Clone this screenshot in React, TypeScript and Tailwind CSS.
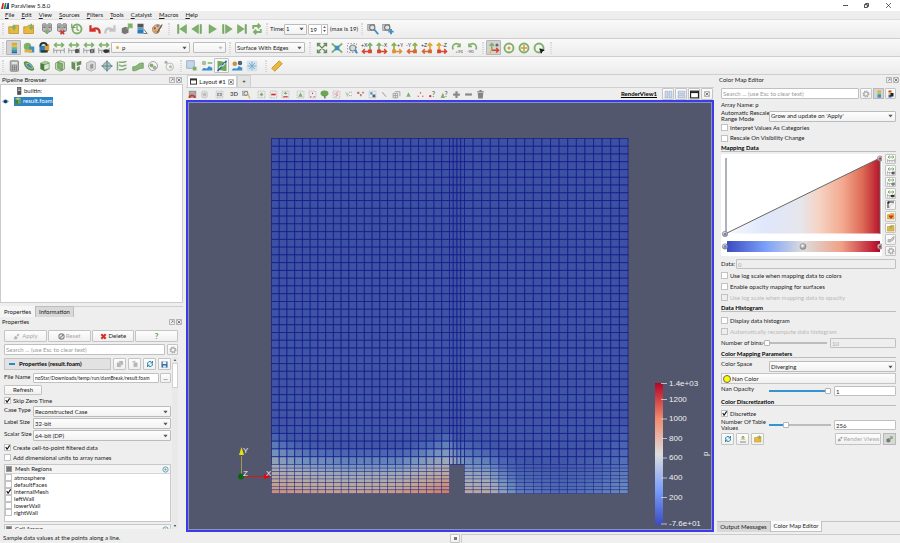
import type { ReactNode } from 'react'

const GREEN = '#7fb069'
const GRAY = '#8c8c8c'
const YELLOW = '#e8b93e'
const RED = '#d3302a'
const BLUE = '#3f8fc4'

const jet = (
  <>
    <rect x="5" y="1" width="7" height="3" fill="#e8a53a" />
    <rect x="5" y="4" width="7" height="3" fill="#d5c34a" />
    <rect x="5" y="7" width="7" height="3" fill="#62b68b" />
    <rect x="5" y="10" width="7" height="3" fill="#3192b8" />
    <rect x="5" y="13" width="7" height="2" fill="#2b5fa0" />
  </>
)
const rescale = (
  <>
    <path d="M2 4h12M5 1 2 4l3 3M11 1l3 3-3 3" fill="none" stroke={GREEN} strokeWidth="2" />
    <path d="M1 8v7M5 11v4M10 11v4M15 8v7M1 11h14" stroke="#888" fill="none" />
  </>
)
const folder = <path d="M1 5h5l1-2h7v11H1z" fill={YELLOW} stroke="#b98d27" />
const servers = (
  <>
    <rect x="2" y="1" width="5" height="10" rx="1" fill="#bdbdbd" stroke="#777" />
    <rect x="9" y="1" width="5" height="10" rx="1" fill="#bdbdbd" stroke="#777" />
    <path d="M3 4h3M10 4h3M3 6h3M10 6h3M4 11l4 3 4-3" stroke="#666" fill="none" />
  </>
)
const box = (
  <>
    <path d="M2 4l6-3 6 2v9l-6 3-6-3z" fill="#6e9e5b" />
    <path d="M2 4l6 2v9l-6-3z" fill="#4d7c40" />
    <path d="M2 4l6-3 6 2-6 3z" fill="#a7c997" />
  </>
)
const frame = <rect x="2" y="2" width="12" height="12" fill="none" stroke="#8a8a8a" strokeDasharray="2 2" />
const loupe = (
  <>
    <rect x="1" y="2" width="9" height="8" fill="#c8ccd0" stroke="#8b8f93" />
    <circle cx="7" cy="6" r="3.5" fill="#dfe6ea" stroke="#777" strokeWidth="1.5" />
  </>
)
const tri = <path d="M8 4l4 8H4z" fill={GREEN} />
const gear = (
  <>
    <circle cx="8" cy="8" r="5.5" fill="none" stroke="#a9a9a9" strokeWidth="3" strokeDasharray="2.6 1.7" />
    <circle cx="8" cy="8" r="4" fill="none" stroke="#a9a9a9" strokeWidth="2" />
  </>
)
const plug = <path d="M2 14l1-5 3-3 5 5-3 3zM8 5l4-4 3 3-4 4z" fill="#909090" />

function axisView(h: string, v: string, text: string, left: boolean) {
  const c = left ? 12 : 4
  return (
    <>
      <path d={left ? 'M12 12.500H2M5 9.500l-3 3 3 3' : 'M4 12.500h10M11 9.500l3 3-3 3'} fill="none" stroke={h} strokeWidth="2" />
      <path d={`M${c} 12V2M${c - 3} 5l3-3 3 3`} fill="none" stroke={v} strokeWidth="2.200" />
      <rect x={c - 2.5} y="10" width="5" height="5" fill={h} />
      <text x={left ? 0 : 8} y="7" fontSize="7" fontFamily="Liberation Sans, sans-serif" fill="#333">{text}</text>
    </>
  )
}

const icons: Record<string, ReactNode> = {
  open: <>{folder}<path d="M8 10V4M5.500 7L8 4l2.500 3" stroke={GREEN} strokeWidth="2" fill="none" /></>,
  save: <>{folder}<path d="M11 1v6M8.500 5l2.500 3 2.500-3" stroke={GREEN} strokeWidth="2" fill="none" /></>,
  connect: <>{servers}<path d="M5 12l3-3 3 3-3 3z" fill={GREEN} /></>,
  disconnect: <>{servers}<path d="M6 10l5 5M11 10l-5 5" stroke={RED} strokeWidth="2" /></>,
  recent: <><circle cx="8" cy="8" r="6" fill="#f3f6ee" stroke={GREEN} strokeWidth="2.500" /><path d="M8 4v5l3 1M1 1v5h5" fill="none" stroke="#779966" strokeWidth="1.500" /></>,
  undo: <path d="M14 14c1-6-4-9-10-5M2 3v7h7" fill="none" stroke={RED} strokeWidth="3" />,
  redo: <path d="M2 14c-1-6 4-9 10-5M14 3v7H7" fill="none" stroke="#c4c4c4" strokeWidth="3" />,
  extract: <><path d="M1 7l5-2 4 2v6l-5 2-4-2z" fill="#777" /><path d="M8 8l6-6M9 2h5v5" stroke={GREEN} strokeWidth="3" fill="none" /></>,
  mapgray: <><g transform="translate(-3 0)"><rect x="5" y="1" width="8" height="5" fill="#555" /><rect x="5" y="6" width="8" height="3" fill="#4a9ccb" /><rect x="5" y="9" width="8" height="5" fill="#2b78b4" /></g><path d="M10 8l5 6M10 14h5" stroke="#555" /></>,
  palette: <><path d="M2 8c0-5 8-8 11-4 2 3-2 3-2 5 1 2-1 5-4 5S2 12 2 8z" fill="#e1b68b" stroke="#a47c52" /><circle cx="5" cy="7" r="1.500" fill={RED} /><circle cx="9" cy="4" r="1.500" fill={BLUE} /><circle cx="6" cy="11" r="1.500" fill={GREEN} /><path d="M15 2L8 13" stroke="#6e5139" strokeWidth="1.500" /></>,
  first: <path d="M2 2h2v12H2zM14 2v12L5 8z" fill={GREEN} stroke="#5f8f4c" strokeWidth=".5" />,
  prev: <path d="M12 2h2v12h-2zM10 2v12L1 8z" fill={GREEN} stroke="#5f8f4c" strokeWidth=".5" />,
  play: <path d="M4 2l10 6-10 6z" fill={GREEN} stroke="#5f8f4c" strokeWidth=".5" />,
  next: <path d="M2 2h2v12H2zM6 2v12l9-6z" fill={GREEN} stroke="#5f8f4c" strokeWidth=".5" />,
  last: <path d="M12 2h2v12h-2zM2 2v12l9-6z" fill={GREEN} stroke="#5f8f4c" strokeWidth=".5" />,
  loop: <path d="M3 8V4h8M9 1l3 3-3 3M13 8v4H5M7 9l-3 3 3 3" fill="none" stroke={GREEN} strokeWidth="2.500" />,
  zoomTime: <>{loupe}<path d="M10 9l5 6" stroke={BLUE} strokeWidth="2.500" /></>,
  addTime: <>{loupe}<path d="M12 8v7M8.500 11.500h7" stroke={BLUE} strokeWidth="2.500" /></>,
  jet,
  editMap: <><circle cx="6" cy="6" r="5" fill={GREEN} /><rect x="8" y="6" width="7" height="8" fill="#3f93b8" /><rect x="2" y="10" width="10" height="4" fill="#e0b14a" /></>,
  separate: <><rect x="2" y="5" width="9" height="9" fill="#2f7fb5" /><rect x="9" y="3" width="6" height="9" fill="#d4a33d" /><path d="M3 6c0-6 8-6 9-1" fill="none" stroke="#333" strokeWidth="2.500" /><path d="M4 11h9v3H4z" fill="#333" /></>,
  rescale,
  rescaleCustom: <>{rescale}<circle cx="12" cy="12" r="3" fill="#555" /></>,
  rescaleTime: <>{rescale}<circle cx="12" cy="12" r="3" fill="#555" /><path d="M12 10v4" stroke="#eee" /></>,
  rescaleVisible: <>{rescale}<ellipse cx="11" cy="12" rx="4" ry="2.500" fill="#333" /></>,
  resetCamera: <path d="M2 6V2h4M10 2h4v4M14 10v4h-4M6 14H2v-4M2 2l12 12M14 2L2 14" fill="none" stroke="#6a8f5b" strokeWidth="1.800" />,
  zoomData: <><path d="M1 2l14 12M15 2L1 14" stroke={GREEN} strokeWidth="2.200" /><path d="M5 5h6v6H5z" fill={BLUE} /></>,
  zoomBox: <>{frame}<circle cx="9" cy="8" r="4" fill="#ccdfe9" stroke="#888" strokeWidth="1.500" /><path d="M12 11l3 4" stroke={BLUE} strokeWidth="2.500" /></>,
  plusX: axisView('#d9442f', GREEN, '+X', true),
  minusX: axisView('#d9442f', GREEN, '-X', false),
  plusY: axisView('#e0902f', '#8eaf45', '+Y', false),
  minusY: axisView('#d9642f', '#8eaf45', '-Y', true),
  plusZ: axisView('#d9642f', '#e0a52f', '+Z', true),
  minusZ: axisView('#d9442f', '#e0a52f', '-Z', false),
  rotCw: <><path d="M3 10a5 5 0 1 1 9-4M8 6h4V2" fill="none" stroke={GREEN} strokeWidth="2.200" /><text x="6" y="15" fontSize="6" fill="#555">+90</text></>,
  rotCcw: <><path d="M13 10a5 5 0 1 0-9-4M8 6H4V2" fill="none" stroke={GREEN} strokeWidth="2.200" /><text x="1" y="15" fontSize="6" fill="#555">-90</text></>,
  axes: <><path d="M5 11V2M2 5l3-3 3 3" fill="none" stroke={GREEN} strokeWidth="2" /><path d="M5 11h9M11 8l3 3-3 3" fill="none" stroke="#d9442f" strokeWidth="2" /><path d="M5 11l-3 4" stroke={YELLOW} strokeWidth="2" /><circle cx="12" cy="4" r="2" fill="#666" /></>,
  centerShow: <><circle cx="8" cy="8" r="6" fill="none" stroke={GREEN} strokeWidth="2.500" /><circle cx="8" cy="8" r="2" fill="#d99a2f" /></>,
  centerReset: <><circle cx="8" cy="8" r="6" fill="none" stroke={GREEN} strokeWidth="2.500" /><path d="M8 4v8M4 8h8" stroke="#d99a2f" strokeWidth="2" /></>,
  centerPick: <><circle cx="8" cy="8" r="6" fill="none" stroke={GREEN} strokeWidth="2.500" /><path d="M9 9l6 2-3 1-1 3z" fill="#111" stroke="#111" /></>,
  calc: <><rect x="3" y="1" width="11" height="14" rx="1" fill="#b8b8b8" stroke="#777" /><rect x="5" y="3" width="7" height="2" fill="#eee" /><path d="M5 8h7M5 10.500h7M5 13h7" stroke="#666" strokeDasharray="1.700 1" strokeWidth="1.500" /></>,
  contour: <><path d="M1 3c3-4 13 2 14 10-4 4-14-2-14-10z" fill="#5b9148" /><path d="M4 5c3-2 8 2 9 6-3 1-9-2-9-6z" fill="#4f86a8" stroke="#b5d5a5" /></>,
  clip: <>{box}<path d="M7 7l6-2v6l-6 2z" fill="#dfe9da" /></>,
  slice: <><path d="M2 4l6-3 6 2v9l-6 3-6-3z" fill="#c9d6c3" stroke="#6c9a5a" /><path d="M5 3l6 2v9l-6-3z" fill="#82b36c" stroke="#5b8b48" /></>,
  threshold: <><path d="M2 2l5 2v10l-5-3zM9 3l6-2v5l-6 2zM9 10l4-2v5l-4 2z" fill="#668f58" /><path d="M2 2h10l-5 2z" fill="#a8caa0" /></>,
  extractSubset: <><path d="M2 4l6-3 6 2v9l-6 3-6-3z" fill="#d8d8d8" stroke="#a8a8a8" /><path d="M7 6l4-1v6l-4 1z" fill="#999" /></>,
  glyph: <><circle cx="8" cy="8" r="5" fill="#b6cfb0" stroke="#789" /><path d="M8 0l2 3H6zM8 16l2-3H6zM0 8l3-2v4zM16 8l-3-2v4z" fill="#5c87a1" /><path d="M4 8h8M8 4v8" stroke="#57819e" strokeWidth="1.500" /></>,
  stream: <path d="M2 2v12M4 3h5c2 0 2-1 5-1M4 7c3 0 3 2 5 1s3-1 5-1M4 13h5c2 0 2-2 5-2" fill="none" stroke="#86ab7a" strokeWidth="2" />,
  warp: <path d="M1 9c5 1 7-6 14-5v7c-6-1-9 5-14 3z" fill="#88b877" stroke="#6a9359" />,
  group: <><circle cx="8" cy="8" r="6" fill="none" stroke={GRAY} /><circle cx="6" cy="7" r="2.500" fill={GREEN} /><circle cx="10" cy="10" r="2.500" fill="#a9a9a9" /></>,
  extractLevel: <><circle cx="9" cy="9" r="5" fill="none" stroke="#aaa" /><circle cx="4" cy="3" r="2" fill="#aaa" /><circle cx="10" cy="9" r="2" fill="#a5c59b" /></>,
  extractSel: <><rect x="1" y="1" width="10" height="10" fill="#c3d5e6" stroke="#8aa3b8" /><path d="M9 9h5v5H9z" fill={GREEN} /></>,
  plotTime: <><circle cx="4" cy="4" r="3" fill="#a8bda1" /><path d="M9 4h6" stroke={GREEN} strokeWidth="2" /><path d="M1 14c3-7 6 0 8-4s4 1 6 0v4z" fill="#3c91ca" /></>,
  plotLine: <><path d="M2 1l12 2v12L2 13z" fill="#6da65a" /><path d="M14 1L2 15" stroke="#2a5d94" strokeWidth="2" /><path d="M4 11c1-6 5 1 8-7" stroke="#bfe5fb" strokeWidth="1.500" fill="none" /></>,
  plotSel: <><circle cx="5" cy="5" r="3" fill="#c98f3a" /><circle cx="12" cy="4" r="3" fill="#4f6374" /><path d="M1 14c3-6 6 0 8-4s4 1 6 0v4z" fill="#3c91ca" /></>,
  probe: <><rect x="1" y="1" width="14" height="14" fill="#d3e4ef" /><path d="M8 2v12M2 8h12M4 4l8 8M12 4l-8 8" stroke="#78a9ca" strokeWidth="1.200" /></>,
  ruler: <path d="M1 11L11 1l4 4L5 15z" fill={YELLOW} stroke="#b78522" />,
  undoCam: <><rect x="2" y="2" width="12" height="11" fill="#aaa" stroke="#777" /><path d="M2 14c2-6 8-6 11 0" stroke={RED} strokeWidth="3" fill="none" /></>,
  redoCam: <><rect x="3" y="2" width="10" height="12" rx="3" fill="#ddd" stroke="#bbb" /><circle cx="8" cy="8" r="3" fill="#bbb" /></>,
  capture: <>{frame}<rect x="4" y="5" width="8" height="6" fill="#888" /><circle cx="8" cy="8" r="2" fill="#d7e6f0" /></>,
  adjust: <>{loupe}<path d="M11 8l3 7" stroke={YELLOW} strokeWidth="2.500" /></>,
  selAdd: <>{frame}<path d="M8 5v6M5 8h6" stroke={GREEN} strokeWidth="2.500" /></>,
  selSub: <>{frame}<path d="M4 8h8" stroke={RED} strokeWidth="3" /></>,
  selToggle: <>{frame}<path d="M8 3v5M5 6h6" stroke={GREEN} strokeWidth="2" /><path d="M4 12h8" stroke={RED} strokeWidth="2" /></>,
  selCells: <>{frame}{tri}</>,
  selPoints: <>{frame}<path d="M4 11h2v2H4zM10 11h2v2h-2zM7 5h2v2H7z" fill={RED} /></>,
  frustum: <><ellipse cx="8" cy="6" rx="7" ry="5" fill="#6aa654" /><path d="M7 9h3v6H7z" fill="#786" /></>,
  polyCells: <>{frame}<path d="M4 7h4l2-4M6 12l5-4" stroke="#e39898" strokeWidth="2" fill="none" /></>,
  polyPoints: <><path d="M2 3l7 4-3 6z" fill="#b5ccaa" /><path d="M9 4h5M9 10h5" stroke="#777" strokeDasharray="2 1" /></>,
  block: <path d="M2 3h4v4H2zM7 7h3v4H7zM11 3h3v3h-3z" fill="#b67f74" />,
  interactive: <>{frame}<path d="M4 4h4v4H4z" fill={BLUE} /><path d="M8 8h5v5H8z" fill="#386991" /></>,
  wand: <path d="M4 4l7 8" stroke="#aaa" strokeWidth="2" />,
  stack: <path d="M2 6h8v8H2zM5 3h9v8M2 10h8M6 6v8" fill="none" stroke="#999" strokeWidth="1.500" />,
  tri,
  dots: <path d="M7 4h2v2H7zM3 10h2v2H3zM11 10h2v2h-2z" fill={RED} />,
  askDot: <><circle cx="4" cy="11" r="2" fill={RED} /><text x="7" y="12" fontSize="12" fontWeight="700" fill="#777">?</text></>,
  askTri: <><path d="M5 5l4 9H1z" fill={GREEN} /><text x="8" y="12" fontSize="12" fontWeight="700" fill="#777">?</text></>,
  grow: <path d="M8 2v12M2 8h12" stroke="#8a8a8a" strokeWidth="4" />,
  shrink: <path d="M2 8h12" stroke="#8a8a8a" strokeWidth="4" />,
  trash: <path d="M3 5h10l-1 10H4zM2 2h12v2H2zM6 0h4v2H6z" fill="#858585" />,
  splitV: <path d="M2 2h5v12H2zM9 2h5v12H9z" fill="#cfd9ec" stroke="#8fa0c4" />,
  splitH: <path d="M2 2h12v5H2zM2 9h12v5H2z" fill="#cfd9ec" stroke="#8fa0c4" />,
  maximize: <><rect x="1" y="2" width="14" height="12" fill="#fff" stroke="#222" strokeWidth="2" /><path d="M1 4h14" stroke="#222" strokeWidth="3" /></>,
  close: <><rect x="1" y="1" width="14" height="14" rx="2" fill="#eee" stroke="#777" strokeWidth="1.500" /><path d="M4 4l8 8M12 4l-8 8" stroke="#555" strokeWidth="2" /></>,
  float: <><rect x="1" y="1" width="14" height="14" rx="2" fill="none" stroke="#777" strokeWidth="1.500" /><path d="M5 11l6-6M7 5h4v4" stroke="#666" strokeWidth="1.500" fill="none" /></>,
  apply: plug,
  reset: <><circle cx="8" cy="8" r="6" fill="none" stroke="#888" strokeWidth="2.500" /><path d="M12 4l-8 8" stroke="#888" strokeWidth="2.500" /></>,
  delete: <path d="M3 3l10 10M13 3L3 13" stroke={RED} strokeWidth="5" />,
  gear,
  copy: <path d="M2 5h8v9H2zM6 2h8v8H6z" fill="#aaa" stroke="#ddd" />,
  paste: <path d="M5 5h8v9H5zM3 2h6v3H3z" fill="#b5b5b5" stroke="#ddd" />,
  refresh: <path d="M3 9a5 5 0 0 1 8-5l2 2M13 2v4H9M13 7a5 5 0 0 1-8 5l-2-2M3 14v-4h4" fill="none" stroke="#2a84ad" strokeWidth="2" />,
  disk: <><path d="M1 1h14v14H1z" fill="#3c6fa8" /><path d="M4 1h8v6H4zM5 10h6v5H5z" fill="#eef3f8" /></>,
  eye: <><path d="M0 8c4-6 12-6 16 0-4 6-12 6-16 0z" fill="#8fb9d4" /><circle cx="8" cy="8" r="4" fill="#153f61" /></>,
  host: <><rect x="5" y="1" width="7" height="14" fill="#555" stroke="#333" /><path d="M6 4h5M6 7h5" stroke="#ddd" strokeWidth="1.500" /></>,
  box,
  jetDark: <><rect x="3" y="1" width="6" height="4" fill="#c73a2f" /><rect x="3" y="5" width="6" height="5" fill="#e5c43a" /><rect x="3" y="10" width="6" height="5" fill="#2a63b5" /><path d="M7 6h6v7H7z" fill="#222" /></>,
  control: <><path d="M2 14V2h12" fill="none" stroke="#222" strokeWidth="2" /><path d="M5 14c0-5 4-9 9-9" fill="none" stroke="#999" /><path d="M1 1h4v4H1z" fill="#222" /></>,
  preset: <>{folder}<path d="M8 14L3 8l3-2 2 2 2-2 3 2z" fill={RED} /></>,
  savePreset: <><path d="M2 14h12" stroke="#888" strokeWidth="2" /><path d="M8 2l5 8H3z" fill="#e4c9a0" /><path d="M8 8V2M5 5l3-3 3 3" stroke={GREEN} strokeWidth="2" fill="none" /></>,
  manual: <path d="M2 14h5v-5H2zM7 9l7-7v6l-5 5" fill="#c1c1c1" stroke="#999" />,
  hub: <><circle cx="8" cy="8" r="6" fill="none" stroke="#4a93a8" strokeWidth="1.800" /><circle cx="8" cy="8" r="2.500" fill="#5fa0b2" /></>,
}

function Icon({ name, className = 'size-[12px]' }: { name: string; className?: string }) {
  return (
    <svg viewBox="0 0 16 16" className={`shrink-0 ${className}`} aria-hidden="true">
      {icons[name]}
    </svg>
  )
}

const pressed = 'border border-[#b5b5b5] bg-[#d2d2d2]'
const hovered = 'border border-[#c0c0c0] bg-[#fafafa]'

function Tools({ names, on, hover }: { names: string[]; on?: string; hover?: string }) {
  return (
    <>
      {names.map(n => (
        <button
          key={n}
          aria-label={n}
          className={`flex size-[15px] shrink-0 items-center justify-center rounded-[1px] ${n === on ? pressed : n === hover ? hovered : ''}`}
        >
          <Icon name={n} />
        </button>
      ))}
    </>
  )
}

function Handle({ className = '' }: { className?: string }) {
  return <span className={`h-[12px] w-[2px] shrink-0 border-x border-dotted border-[#d8d8d8] ${className}`} />
}

function Select({ value, label, className = '', disabled = false }: { value: string; label: string; className?: string; disabled?: boolean }) {
  return (
    <span className={`relative flex h-[11px] ${className}`}>
      <select
        aria-label={label}
        disabled={disabled}
        className="h-full w-full appearance-none rounded-[1px] border border-[#bcbcbc] bg-linear-to-b from-[#fdfdfd] to-[#f2f2f2] pl-[1px]"
      >
        <option>{value}</option>
      </select>
      <svg viewBox="0 0 6 4" className="pointer-events-none absolute top-1/2 right-[3px] h-[3px] w-[5px] -translate-y-1/2" aria-hidden="true">
        <path d="M0 0h6L3 4z" fill={disabled ? '#bbb' : '#555'} />
      </svg>
    </span>
  )
}

function Tick({ checked, disabled = false }: { checked: boolean; disabled?: boolean }) {
  return (
    <span className="relative flex shrink-0">
      <input
        type="checkbox"
        defaultChecked={checked}
        disabled={disabled}
        className="peer size-[7px] appearance-none border border-[#c2c2c2] bg-white disabled:bg-[#eeeeee]"
      />
      <svg viewBox="0 0 8 8" className="pointer-events-none absolute inset-0 hidden size-[7px] peer-checked:block" aria-hidden="true">
        <path d="M2 3.500L3.500 6 6.500 1.500" fill="none" stroke="#111" strokeWidth="1.300" />
      </svg>
    </span>
  )
}

function Check({ label, checked = false, disabled = false, className = 'h-[11px]' }: { label: string; checked?: boolean; disabled?: boolean; className?: string }) {
  return (
    <label className={`flex shrink-0 items-center gap-[2px] ${disabled ? 'text-[#b9b9b9]' : ''} ${className}`}>
      <Tick checked={checked} disabled={disabled} />
      {label}
    </label>
  )
}

const btn = 'flex shrink-0 items-center justify-center rounded-[1px] border border-[#c4c4c4] bg-linear-to-b from-[#fdfdfd] to-[#f0f0f0]'
const field = 'min-w-0 rounded-[1px] border border-[#c0c0c0] bg-white px-[1px] placeholder:text-[#999] disabled:bg-[#eeeeee] disabled:text-[#aaa]'
const thumb =
  'h-[6px] appearance-none bg-transparent [&::-webkit-slider-thumb]:-mt-[2px] [&::-webkit-slider-thumb]:size-[6px] [&::-webkit-slider-thumb]:appearance-none [&::-webkit-slider-thumb]:rounded-[1px] [&::-webkit-slider-thumb]:border [&::-webkit-slider-thumb]:border-[#b5b5b5] [&::-webkit-slider-thumb]:bg-white [&::-webkit-slider-runnable-track]:h-[2px]'

function DockHeader({ title }: { title: string }) {
  return (
    <header className="flex h-[9px] shrink-0 items-center pl-[2px]">
      <h2 className="flex-1">{title}</h2>
      <button aria-label={`Float ${title}`}><Icon name="float" className="size-[6px]" /></button>
      <button aria-label={`Close ${title}`} className="mr-px ml-[1px]"><Icon name="close" className="size-[6px]" /></button>
    </header>
  )
}

function Heading({ children, className = '' }: { children: ReactNode; className?: string }) {
  return <h3 className={`flex h-[9px] shrink-0 items-end border-b border-[#bdbdbd] leading-[6px] font-bold text-black ${className}`}>{children}</h3>
}

function TitleBar() {
  return (
    <header className="flex h-[11px] shrink-0 items-center bg-white pl-[1px]">
      <svg viewBox="0 0 16 12" className="h-[6px] w-[8px]" aria-hidden="true">
        <path d="M3 0h3L4 12H0z" fill="#c22" />
        <path d="M8 0h3L9 12H5z" fill="#2a8a3a" />
        <path d="M13 0h3v12h-6z" fill="#224a9a" />
      </svg>
      <h1 className="ml-[2px] flex-1">ParaView 5.8.0</h1>
      <button aria-label="Minimize" className="mr-[16px]"><svg viewBox="0 0 6 6" className="size-[5px]"><path d="M0 3h6" stroke="#333" /></svg></button>
      <button aria-label="Restore" className="mr-[17px]"><svg viewBox="0 0 6 6" className="size-[5px]"><path d="M.5 2h3.500v3.500H.5zM2 2V.5h3.500V4H4" fill="none" stroke="#222" /></svg></button>
      <button aria-label="Close" className="mr-[9px]"><svg viewBox="0 0 6 6" className="size-[5px]"><path d="M0 0l6 6M6 0L0 6" stroke="#222" strokeWidth=".8" /></svg></button>
    </header>
  )
}

function MenuBar() {
  const items = ['File', 'Edit', 'View', 'Sources', 'Filters', 'Tools', 'Catalyst', 'Macros', 'Help']
  return (
    <nav className="flex h-[9px] shrink-0 items-center gap-[7px] border-b border-[#dcdcdc] pl-[5px]">
      {items.map(m => (
        <button key={m}><span className="underline">{m[0]}</span>{m.slice(1)}</button>
      ))}
    </nav>
  )
}

const bar = 'flex shrink-0 items-center border-b border-[#cfcfcf] bg-linear-to-b from-[#f9f9f9] to-[#ececec] pl-[2px]'

function Toolbars() {
  return (
    <>
      <div className={`${bar} h-[19px]`}>
        <Handle className="mr-[2px]" />
        <Tools names={['open', 'save']} />
        <span className="w-[3px]" />
        <Tools names={['connect', 'disconnect', 'recent']} />
        <span className="w-[3px]" />
        <Tools names={['undo', 'redo']} />
        <span className="w-[2px]" />
        <Tools names={['extract', 'mapgray', 'palette']} />
        <Handle className="mx-[4px]" />
        <Tools names={['first', 'prev', 'play', 'next', 'last', 'loop']} />
        <Handle className="mr-[2px] ml-[2px]" />
        <span className="w-[14px]">Time:</span>
        <Select label="Time" value="1" className="w-[23px]" />
        <input aria-label="Time step" type="text" defaultValue="19" className={`${field} ml-[1px] h-[11px] w-[14px]`} />
        <span className="mr-[2px] flex h-[11px] w-[6px] flex-col items-center justify-center gap-[2px] border border-l-0 border-[#c0c0c0] bg-white">
          <button aria-label="Step up"><svg viewBox="0 0 4 3" className="h-[2px] w-[3px]"><path d="M0 3h4L2 0z" fill="#555" /></svg></button>
          <button aria-label="Step down"><svg viewBox="0 0 4 3" className="h-[2px] w-[3px]"><path d="M0 0h4L2 3z" fill="#555" /></svg></button>
        </span>
        <span className="w-[31px] whitespace-nowrap">(max is 19)</span>
        <Handle className="mr-[2px]" />
        <Tools names={['zoomTime', 'addTime']} />
      </div>
      <div className={`${bar} h-[18px]`}>
        <Handle className="mr-[2px]" />
        <Tools names={['jet', 'editMap', 'separate', 'rescale', 'rescaleCustom', 'rescaleTime', 'rescaleVisible']} on="jet" />
        <span className="relative flex">
          <Select label="Coloring" value="p" className="w-[79px] [&>select]:pl-[10px]" />
          <span className="pointer-events-none absolute top-[4px] left-[5px] size-[3px] rounded-full bg-[#dcae45]" />
        </span>
        <Select label="Component" value="" disabled className="ml-[3px] w-[33px]" />
        <Handle className="mx-[3px]" />
        <Select label="Representation" value="Surface With Edges" className="ml-[1px] w-[70px]" />
        <Handle className="mr-[3px] ml-[4px]" />
        <Tools names={['resetCamera', 'zoomData', 'zoomBox', 'plusX', 'minusX', 'plusY', 'minusY', 'plusZ', 'minusZ', 'rotCw', 'rotCcw']} />
        <Handle className="mr-[2px] ml-[3px]" />
        <Tools names={['axes', 'centerShow', 'centerReset', 'centerPick']} on="axes" />
        <Handle className="ml-[4px]" />
      </div>
      <div className={`${bar} h-[18px]`}>
        <Handle className="mr-[2px]" />
        <div className="flex w-[170px] justify-between">
          <Tools names={['calc', 'contour', 'clip', 'slice', 'threshold', 'extractSubset', 'glyph', 'stream', 'warp', 'group', 'extractLevel']} />
        </div>
        <Handle className="mr-[2px] ml-[4px]" />
        <Tools names={['extractSel', 'plotTime', 'plotLine', 'plotSel', 'probe']} hover="plotLine" />
        <Handle className="mr-[2px] ml-[6px]" />
        <Tools names={['ruler']} />
      </div>
    </>
  )
}

function PipelineBrowser() {
  return (
    <section className="flex min-h-0 flex-1 flex-col">
      <DockHeader title="Pipeline Browser" />
      <ul className="flex-1 border border-[#cccccc] bg-white pt-px">
        <li className="flex h-[10px] items-center pl-[14px]"><Icon name="host" className="size-[8px]" /><span className="ml-[1px]">builtin:</span></li>
        <li className="flex h-[10px] items-center">
          <button aria-label="Toggle visibility" className="mr-[5px] ml-[1px]"><Icon name="eye" className="size-[7px]" /></button>
          <span className="flex h-[9px] items-center gap-[1px] bg-[#2b84c6] pr-[1px] text-white"><Icon name="box" className="size-[8px]" />result.foam</span>
        </li>
      </ul>
    </section>
  )
}

function FormSelect({ label, value }: { label: string; value: string }) {
  return (
    <div className="mt-px flex h-[11px]">
      <span className="w-[29px] whitespace-nowrap">{label}</span>
      <Select label={label} value={value} className="flex-1" />
    </div>
  )
}

const regions = ['atmosphere', 'defaultFaces', 'internalMesh', 'leftWall', 'lowerWall', 'rightWall']

function ListHead({ title }: { title: string }) {
  return (
    <div className="flex h-[9px] items-center gap-[3px] border-b border-[#d5d5d5] bg-[#f4f4f4] px-[1px]">
      <span className="size-[6px] border border-[#999] bg-[#777]" />
      <span className="flex-1">{title}</span>
      <Icon name="hub" className="size-[7px]" />
    </div>
  )
}

function PropertiesPanel() {
  return (
    <section className="shrink-0 pb-[4px]">
      <div role="tablist" className="mt-[3px] flex h-[11px]">
        <button role="tab" aria-selected className="w-[36px] border-r border-[#bbb] bg-[#f5f5f5]">Properties</button>
        <button role="tab" className="w-[38px] border-t border-r border-[#bdbdbd] bg-[#d9d9d9]">Information</button>
        <span className="flex-1 border-t border-[#cfcfcf]" />
      </div>
      <DockHeader title="Properties" />
      <div className="mt-[4px] mr-[5px] ml-[4px] grid h-[12px] grid-cols-4 gap-px">
        <button disabled className={`${btn} gap-[2px] text-[#aaa]`}><Icon name="apply" className="size-[7px] opacity-60" />Apply</button>
        <button disabled className={`${btn} gap-[1px] text-[#aaa]`}><Icon name="reset" className="size-[7px]" />Reset</button>
        <button className={`${btn} gap-[2px]`}><Icon name="delete" className="size-[7px]" />Delete</button>
        <button aria-label="Help" className={`${btn} text-[8px] font-bold text-[#679d50]`}>?</button>
      </div>
      <div className="mt-[2px] mr-[5px] ml-[4px] flex h-[11px] gap-[2px]">
        <input type="text" aria-label="Search properties" placeholder="Search ... (use Esc to clear text)" className={`${field} flex-1`} />
        <button aria-label="Advanced" className={`${btn} w-[11px]`}><Icon name="gear" className="size-[8px]" /></button>
      </div>
      <div className="mt-[2px] mr-[5px] flex h-[172px] overflow-hidden pl-[4px]">
        <div className="min-w-0 flex-1">
          <div className="mt-px flex h-[12px] gap-[2px]">
            <button className="flex flex-1 items-center border border-[#c5c5c5] bg-[#e2e2e2] pl-[4px] font-bold text-black">
              <span className="mr-[4px] h-[2px] w-[6px] bg-[#2b8abf]" />Properties (result.foam)
            </button>
            <button aria-label="Copy" className={`${btn} w-[13px]`}><Icon name="copy" className="size-[8px]" /></button>
            <button aria-label="Paste" className={`${btn} w-[13px]`}><Icon name="paste" className="size-[8px]" /></button>
            <button aria-label="Restore defaults" className={`${btn} w-[13px]`}><Icon name="refresh" className="size-[8px]" /></button>
            <button aria-label="Save defaults" className={`${btn} w-[13px]`}><Icon name="disk" className="size-[7px]" /></button>
          </div>
          <div className="mt-[3px] flex h-[10px]">
            <label htmlFor="file" className="w-[29px] whitespace-nowrap">File Name</label>
            <input id="file" type="text" defaultValue="noStar/Downloads/temp/run/damBreak/result.foam" className={`${field} flex-1 text-[5px]`} />
            <button aria-label="Browse" className={`${btn} ml-[1px] w-[11px]`}>...</button>
          </div>
          <button className={`${btn} mt-[2px] h-[10px] w-[38px]`}>Refresh</button>
          <Check label="Skip Zero Time" checked className="mt-px h-[9px]" />
          <FormSelect label="Case Type" value="Reconstructed Case" />
          <FormSelect label="Label Size" value="32-bit" />
          <FormSelect label="Scalar Size" value="64-bit (DP)" />
          <Check label="Create cell-to-point filtered data" checked className="mt-[2px] h-[9px]" />
          <Check label="Add dimensional units to array names" className="mt-px h-[9px]" />
          <div className="mt-[2px] h-[58px] border border-[#c8c8c8] bg-white">
            <ListHead title="Mesh Regions" />
            {regions.map(r => (
              <Check key={r} label={r} checked={r === 'internalMesh'} className="h-[7px]" />
            ))}
          </div>
          <div className="mt-[2px] border border-[#c8c8c8] bg-white">
            <ListHead title="Cell Arrays" />
          </div>
        </div>
        <div className="ml-[1px] flex w-[6px] flex-col items-center bg-[#e9e9e9]">
          <svg viewBox="0 0 4 3" className="my-[2px] h-[2px] w-[4px]"><path d="M0 3h4L2 0z" fill="#666" /></svg>
          <span className="h-[25px] w-full border border-[#d0d0d0] bg-white" />
          <span className="flex-1" />
          <svg viewBox="0 0 4 3" className="my-[2px] h-[2px] w-[4px]"><path d="M0 0h4L2 3z" fill="#555" /></svg>
        </div>
      </div>
    </section>
  )
}

// Mesh block boundaries in scene units
const X0 = 271.5, X1 = 449.5, X2 = 464.5, X3 = 628
const Y0 = 138.5, Y1 = 464.5, Y2 = 493.5

function split(a: number, b: number, n: number) {
  return Array.from({ length: n }, (_, i) => a + ((b - a) * i) / n)
}

const xs = [...split(X0, X1, 23), ...split(X1, X2, 4), ...split(X2, X3, 19), X3]
const ys = [...split(Y0, Y1, 42), ...split(Y1, Y2, 8), Y2]

// [x, height where pressure starts to rise, value at the floor]
const profile = [
  [271, 430, 0.78], [300, 442, 0.74], [350, 448, 0.7], [400, 448, 0.74], [430, 438, 0.82], [449, 430, 0.86],
  [457, 438, 0.82], [466, 439, 0.64], [490, 446, 0.62], [502, 452, 0.46], [520, 460, 0.28], [560, 464, 0.2], [600, 450, 0.26], [628, 420, 0.34],
]

const lit: [number, number[]][] = [
  [0, [58, 78, 160]], [0.2, [78, 108, 178]], [0.35, [114, 147, 188]], [0.5, [162, 171, 180]], [0.65, [190, 168, 152]], [0.8, [204, 140, 118]], [1, [176, 74, 68]],
]

function pressure(x: number, y: number) {
  const i = Math.max(1, profile.findIndex(p => p[0] >= x))
  const a = profile[i - 1], b = profile[i]
  const k = (x - a[0]) / (b[0] - a[0])
  const top = a[1] + (b[1] - a[1]) * k
  const floor = a[2] + (b[2] - a[2]) * k
  const base = 0.02 + 0.05 * Math.max(0, (y - 250) / 240)
  return y < top ? base : base + (floor - base) * ((y - top) / (Y2 - top)) ** 0.85
}

function shade(t: number) {
  const i = Math.max(1, lit.findIndex(s => s[0] >= t))
  const [t0, c0] = lit[i - 1], [t1, c1] = lit[i]
  return `rgb(${c0.map((c, n) => Math.round(c + ((c1[n] - c) * (t - t0)) / (t1 - t0))).join(',')})`
}

const inBlock = (x: number, y: number) => x > X1 && x < X2 && y > Y1

function Mesh() {
  return (
    <g>
      {ys.slice(1).map((y, j) =>
        xs.slice(1).map((x, i) => {
          const cx = (x + xs[i]) / 2, cy = (y + ys[j]) / 2
          if (inBlock(cx, cy)) return null
          return (
            <rect
              key={`${i}-${j}`} x={xs[i]} y={ys[j]} width={x - xs[i]} height={y - ys[j]}
              fill={shade(pressure(cx, cy))} stroke="#12148c" strokeWidth={j > 41 ? 0.5 : 1} strokeOpacity="0.65"
            />
          )
        }),
      )}
    </g>
  )
}

const ticks: [number, string][] = [
  [383.5, '1.4e+03'], [399.5, '1200'], [419, '1000'], [438.5, '800'], [458, '600'], [478, '400'], [497.5, '200'], [524, '-7.6e+01'],
]

function RenderView() {
  return (
    <div className="min-h-0 flex-1 border-2 border-[#3b3be8] bg-[#52576e]">
      <svg viewBox="189 103 522 426" className="size-full border border-[#8d90bd]" fontFamily="Liberation Sans, sans-serif">
        <defs>
          <linearGradient id="legend" x1="0" y1="1" x2="0" y2="0">
            <stop offset="0" stopColor="#3b4cc0" /><stop offset=".25" stopColor="#7b9ff9" /><stop offset=".5" stopColor="#dddddd" />
            <stop offset=".75" stopColor="#f08a6c" /><stop offset="1" stopColor="#b40426" />
          </linearGradient>
        </defs>
        <Mesh />
        <path d="M241.500 476V456" stroke="#a09a50" />
        <path d="M241.500 447l2.500 8h-5z" fill="#e8e000" />
        <path d="M241 476.500h25" stroke="#d01818" />
        <path d="M271 476.500l-7-2.500v5z" fill="#f00000" />
        <circle cx="241" cy="476.500" r="3" fill="#0a6410" />
        <g fill="#f0f0f0" fontSize="8">
          <text x="243" y="453">Y</text>
          <text x="243" y="476">Z</text>
          <text x="266" y="476">X</text>
        </g>
        <rect x="655" y="383" width="8" height="142" fill="url(#legend)" />
        {ticks.map(([y, label]) => (
          <g key={label}>
            <path d={`M661 ${y}h6`} stroke="#d8d8d8" strokeWidth=".8" />
            <text x="669" y={y + 2} fontSize="8" fill="#f0f0f0">{label}</text>
          </g>
        ))}
        <text transform="translate(708 456) rotate(-90)" fontSize="8" fill="#f0f0f0">p</text>
      </svg>
    </div>
  )
}

function SmallTools({ names }: { names: string[] }) {
  return (
    <>
      {names.map(n => (
        <button key={n} aria-label={n} className="flex w-[12px] justify-center"><Icon name={n} className="size-[9px]" /></button>
      ))}
    </>
  )
}

function CenterPanel() {
  return (
    <main className="mr-[2px] ml-[3px] flex min-w-0 flex-1 flex-col pb-px">
      <div role="tablist" className="flex h-[13px] shrink-0 items-end border-b border-[#d0d0d0] pl-[1px]">
        <button role="tab" aria-selected className="flex h-[12px] w-[50px] items-center justify-center gap-[2px] border-x border-t border-[#cfcfcf] bg-white">
          <Icon name="maximize" className="size-[7px]" />Layout #1<Icon name="close" className="size-[6px]" />
        </button>
        <button role="tab" aria-label="New layout" className="h-[12px] w-[14px] border border-b-0 border-[#d0d0d0] bg-[#e4e4e4]">+</button>
      </div>
      <div className="flex h-[12px] shrink-0 items-center">
        <SmallTools names={['undoCam', 'redoCam']} />
        <span className="w-[3px]" />
        <SmallTools names={['capture']} />
        <span className="w-[3px]" />
        <button className="w-[12px] font-bold text-[#555]">3D</button>
        <SmallTools names={['adjust']} />
        <span className="w-[3px]" />
        <SmallTools names={['selAdd', 'selSub', 'selToggle']} />
        <span className="w-[3px]" />
        <SmallTools names={['selCells', 'selPoints', 'frustum', 'polyCells', 'polyPoints', 'block', 'interactive', 'wand', 'stack', 'tri', 'dots', 'askDot', 'askTri', 'grow', 'shrink', 'trash']} />
        <span className="flex-1" />
        <span className="mr-[5px] font-bold text-black underline">RenderView1</span>
        <div className="mr-px flex gap-px">
          {['splitV', 'splitH', 'maximize', 'close'].map(n => (
            <button key={n} aria-label={n} className={`${btn} size-[12px]`}><Icon name={n} className={n === 'close' ? 'size-[6px]' : 'size-[9px]'} /></button>
          ))}
        </div>
      </div>
      <RenderView />
    </main>
  )
}

function TransferFunction() {
  const side = ['rescale', 'rescaleCustom', 'rescaleTime', 'rescaleVisible', 'control', 'preset', 'open', 'manual', 'gear']
  return (
    <div className="mt-[2px] flex h-[102px] shrink-0 gap-[3px]">
      <svg viewBox="721 154 161 102" className="min-w-0 flex-1 bg-white" preserveAspectRatio="none">
        <defs>
          <linearGradient id="fade" x1="726" x2="881" y1="0" y2="0" gradientUnits="userSpaceOnUse">
            <stop offset="0" stopColor="#f8f9ff" /><stop offset=".25" stopColor="#dfe7fc" /><stop offset=".48" stopColor="#e6e6ec" />
            <stop offset=".6" stopColor="#f6d3c4" /><stop offset=".75" stopColor="#f3aa90" /><stop offset=".88" stopColor="#dd6b56" /><stop offset="1" stopColor="#b40f28" />
          </linearGradient>
          <linearGradient id="full">
            <stop offset="0" stopColor="#3b4cc0" /><stop offset=".25" stopColor="#7b9ff9" /><stop offset=".5" stopColor="#dddddd" />
            <stop offset=".75" stopColor="#f0a085" /><stop offset="1" stopColor="#b40426" />
          </linearGradient>
          <radialGradient id="knob" cx=".4" cy=".35"><stop offset="0" stopColor="#fff" /><stop offset="1" stopColor="#999" /></radialGradient>
        </defs>
        <path d="M726 233.500L880 158v75.500z" fill="url(#fade)" />
        <path d="M726 233.500L880 158v76" fill="none" stroke="#666" />
        <path d="M726 158v75" stroke="#9299a2" strokeWidth="1.500" />
        <rect x="727" y="241" width="153" height="11" fill="url(#full)" />
        <g stroke="#777" strokeWidth=".5" fill="url(#knob)">
          <circle cx="725" cy="234" r="2.700" /><circle cx="880" cy="158.500" r="2.700" /><circle cx="725" cy="246.500" r="2.700" />
          <circle cx="803" cy="246.500" r="3" /><circle cx="880" cy="246.500" r="2.700" />
        </g>
        <circle cx="725" cy="234" r="1.300" fill="#6a7fe0" /><circle cx="725" cy="246.500" r="1.300" fill="#6a7fe0" />
        <circle cx="880" cy="158.500" r="1.300" fill="#c23040" /><circle cx="880" cy="246.500" r="1.300" fill="#c23040" />
      </svg>
      <div className="grid w-[11px] shrink-0 gap-px">
        {side.map(n => (
          <button key={n} aria-label={n} className={btn}><Icon name={n} className="size-[8px]" /></button>
        ))}
      </div>
    </div>
  )
}

function ColorMapEditor() {
  return (
    <aside className="flex w-[184px] shrink-0 flex-col">
      <div className="pl-px"><DockHeader title="Color Map Editor" /></div>
      <div className="mt-[4px] mr-[4px] ml-[5px] flex flex-1 flex-col">
        <div className="flex h-[11px] shrink-0 gap-px">
          <input type="text" aria-label="Search color map" placeholder="Search ... (use Esc to clear text)" className={`${field} flex-1`} />
          <button aria-label="Advanced" className={`${btn} w-[12px]`}><Icon name="gear" className="size-[8px]" /></button>
          <button aria-label="Use separate color map" className="flex w-[11px] items-center justify-center border border-[#b8b8b8] bg-[#d4d4d4]"><Icon name="jet" className="size-[8px]" /></button>
          <button aria-label="Choose preset" className={`${btn} w-[11px]`}><Icon name="jetDark" className="size-[8px]" /></button>
        </div>
        <p className="flex h-[11px] shrink-0 items-center">Array Name: p</p>
        <div className="flex h-[12px] shrink-0 items-center">
          <span className="w-[48px] leading-[6px] whitespace-nowrap">Automatic Rescale<br />Range Mode</span>
          <Select label="Automatic Rescale Range Mode" value="Grow and update on 'Apply'" className="flex-1" />
        </div>
        <Check label="Interpret Values As Categories" />
        <Check label="Rescale On Visibility Change" className="h-[10px]" />
        <Heading>Mapping Data</Heading>
        <TransferFunction />
        <div className="mt-[3px] flex h-[10px] shrink-0 items-center">
          <label htmlFor="data" className="w-[15px]">Data:</label>
          <input id="data" type="text" disabled defaultValue="0" className={`${field} h-full flex-1`} />
        </div>
        <Check label="Use log scale when mapping data to colors" className="mt-px h-[11px]" />
        <Check label="Enable opacity mapping for surfaces" />
        <Check label="Use log scale when mapping data to opacity" disabled />
        <Heading>Data Histogram</Heading>
        <Check label="Display data histogram" className="mt-[3px] h-[11px]" />
        <Check label="Automatically recompute data histogram" disabled />
        <div className="mt-px flex h-[10px] shrink-0 items-center">
          <label htmlFor="bins" className="w-[41px] whitespace-nowrap">Number of bins:</label>
          <input id="bins" type="range" disabled defaultValue="4" className={`${thumb} mr-[3px] min-w-0 flex-1 [&::-webkit-slider-runnable-track]:bg-[#bcbcbc]`} />
          <input type="text" aria-label="Bins" disabled defaultValue="10" className={`${field} h-full w-[66px]`} />
        </div>
        <Heading className="mt-px">Color Mapping Parameters</Heading>
        <div className="mt-[3px] flex h-[10px] shrink-0">
          <span className="w-[48px] leading-[6px]">Color Space</span>
          <Select label="Color Space" value="Diverging" className="flex-1" />
        </div>
        <button className="mt-[2px] flex h-[11px] shrink-0 items-center gap-[1px] border border-[#c4c4c4] bg-linear-to-b from-[#fdfdfd] to-[#f0f0f0] pl-px">
          <span className="size-[8px] rounded-full border border-[#666] bg-[#ffff00]" />Nan Color
        </button>
        <div className="mt-[2px] flex h-[10px] shrink-0">
          <label htmlFor="nan" className="w-[48px] leading-[6px]">Nan Opacity</label>
          <input id="nan" type="range" defaultValue="100" className={`${thumb} mr-[3px] min-w-0 flex-1 self-center [&::-webkit-slider-runnable-track]:bg-[#3593cf]`} />
          <input type="text" aria-label="Nan opacity value" defaultValue="1" className={`${field} h-full w-[62px]`} />
        </div>
        <Heading className="mt-px">Color Discretization</Heading>
        <Check label="Discretize" checked className="mt-[2px] h-[11px]" />
        <div className="flex h-[12px] shrink-0 items-center">
          <label htmlFor="table" className="w-[48px] leading-[6px]">Number Of Table Values</label>
          <input id="table" type="range" defaultValue="25" className={`${thumb} mr-[3px] min-w-0 flex-1 [&::-webkit-slider-runnable-track]:bg-linear-to-r [&::-webkit-slider-runnable-track]:from-[#3593cf] [&::-webkit-slider-runnable-track]:from-25% [&::-webkit-slider-runnable-track]:to-[#bcbcbc] [&::-webkit-slider-runnable-track]:to-25%`} />
          <input type="text" aria-label="Table values" defaultValue="256" className={`${field} h-[10px] w-[62px]`} />
        </div>
        <div className="mt-[2px] flex h-[12px] shrink-0 gap-[2px]">
          <button aria-label="Refresh" className={`${btn} w-[13px]`}><Icon name="refresh" className="size-[8px]" /></button>
          <button aria-label="Save preset" className={`${btn} w-[13px]`}><Icon name="savePreset" className="size-[8px]" /></button>
          <button aria-label="Choose preset file" className={`${btn} w-[13px]`}><Icon name="save" className="size-[8px]" /></button>
          <span className="flex-1" />
          <button disabled className={`${btn} w-[46px] gap-[1px] whitespace-nowrap text-[#aaa]`}><Icon name="apply" className="size-[6px] opacity-80" />Render Views</button>
          <button aria-label="Auto apply" className="flex w-[13px] items-center justify-center border border-[#b8b8b8] bg-[#d8d8d8]"><Icon name="extract" className="size-[7px]" /></button>
        </div>
      </div>
      <div role="tablist" className="flex h-[12px] shrink-0 pb-px pl-[1px]">
        <button role="tab" className="w-[54px] border-t border-r border-[#bdbdbd] bg-[#d9d9d9]">Output Messages</button>
        <button role="tab" aria-selected className="w-[51px] border-r border-b border-[#c4c4c4] bg-[#fafafa]">Color Map Editor</button>
        <span className="flex-1 border-t border-[#c4c4c4]" />
      </div>
    </aside>
  )
}

export default function App() {
  return (
    <div className="flex h-screen flex-col overflow-hidden bg-[#eeeeee] font-[Lato,'Liberation_Sans',sans-serif] text-[6px] leading-[8px] text-[#222]">
      <TitleBar />
      <MenuBar />
      <Toolbars />
      <div className="flex min-h-0 flex-1">
        <aside className="flex w-[183px] shrink-0 flex-col">
          <PipelineBrowser />
          <PropertiesPanel />
        </aside>
        <CenterPanel />
        <ColorMapEditor />
      </div>
      <footer className="grid h-[10px] shrink-0 grid-cols-2 items-center">
        <span className="pl-[3px]">Sample data values at the points along a line.</span>
        <div className="flex h-full items-center">
          <button aria-label="Abort" className={`${btn} h-[9px] w-[10px]`}><span className="size-[3px] bg-[#777]" /></button>
          <span className="ml-px h-[9px] flex-1 border-t border-l border-[#cccccc] bg-[#f0f0f0]" />
        </div>
      </footer>
    </div>
  )
}
